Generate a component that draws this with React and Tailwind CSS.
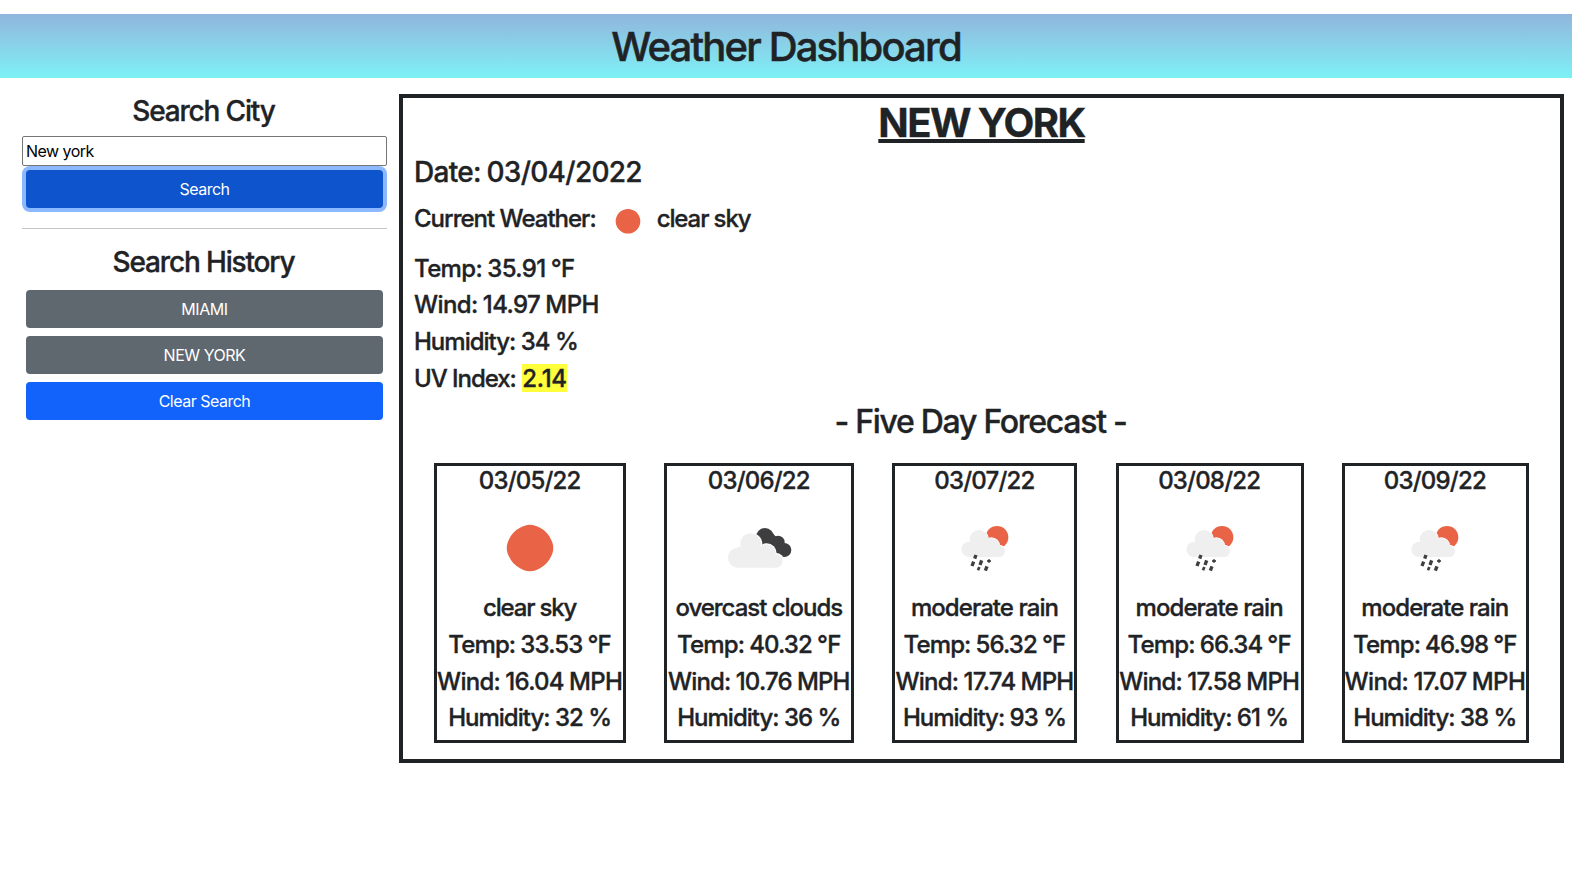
const SUN = "#e96346";
const CLOUD = "#efefef";
const DARK = "#3e3e40";

function SunIcon() {
  return (
    <svg width="80" height="70" viewBox="0 0 80 70">
      <path
        d="M40 14.7C44 14.7 46.5 16 50 17.8C55.500 20.500 59 25 61 29.500C64 35 64 41 61 46.500C59 51 55.500 55.500 50 58.200C46.500 60 44 61.300 40 61.300C36 61.300 33.500 60 30 58.200C24.500 55.500 21 51 19 46.500C16 41 16 35 19 29.500C21 25 24.500 20.500 30 17.800C33.500 16 36 14.700 40 14.700Z"
        fill={SUN}
      />
    </svg>
  );
}

function CloudsIcon() {
  return (
    <svg width="80" height="70" viewBox="-3 0 240 210">
      <g fill={DARK}>
        <circle cx="135" cy="81" r="27" />
        <circle cx="174" cy="97" r="20" />
        <circle cx="193" cy="120" r="21" />
        <path d="M118 96L150 62L200 112L186 139L150 120Z" />
      </g>
      <g fill="#fff">
        <circle cx="92" cy="103" r="35" />
        <circle cx="140" cy="130" r="30" />
        <circle cx="168" cy="153" r="24" />
      </g>
      <g fill={CLOUD}>
        <circle cx="54" cy="143" r="30" />
        <circle cx="92" cy="101" r="31" />
        <circle cx="140" cy="130" r="27" />
        <circle cx="168" cy="153" r="20" />
        <path d="M54 110H140L168 140V173H54Z" />
      </g>
    </svg>
  );
}

function RainIcon() {
  return (
    <svg width="80" height="70" viewBox="-14 0 240 210">
      <circle cx="142" cy="82" r="34" fill={SUN} />
      <g fill="#fff">
        <circle cx="88" cy="88" r="30" />
        <circle cx="125" cy="108" r="26" />
        <circle cx="149" cy="123" r="19" />
      </g>
      <g fill={CLOUD}>
        <circle cx="58" cy="118" r="23" />
        <circle cx="88" cy="88" r="28" />
        <circle cx="125" cy="108" r="24" />
        <circle cx="149" cy="124" r="17" />
        <path d="M58 100H125L149 115V141H58Z" />
      </g>
      <g stroke={DARK} strokeWidth="10" fill="none">
        <path d="M79 135L75 146" />
        <path d="M72 155L67 168" />
        <path d="M96 151L91 165" />
        <path d="M118 148V158" strokeWidth="5" />
        <path d="M112 153H124" strokeWidth="5" />
        <path d="M89 171L85 181" strokeWidth="8" />
        <path d="M112 169L107 182" />
      </g>
    </svg>
  );
}

const days = [
  { date: "03/05/22", Icon: SunIcon, sky: "clear sky", skyCls: "tracking-[-1.2px]", temp: "33.53", wind: "16.04", windCls: "tracking-[-0.72px]", hum: "32", width: "w-[192px]" },
  { date: "03/06/22", Icon: CloudsIcon, sky: "overcast clouds", skyCls: "tracking-[-1.03px]", temp: "40.32", wind: "10.76", windCls: "tracking-[-0.8px]", hum: "36", width: "w-[190px]" },
  { date: "03/07/22", Icon: RainIcon, sky: "moderate rain", skyCls: "tracking-[-0.94px]", temp: "56.32", wind: "17.74", windCls: "tracking-[-0.75px]", hum: "93", width: "w-[185px]" },
  { date: "03/08/22", Icon: RainIcon, sky: "moderate rain", skyCls: "tracking-[-0.94px]", temp: "66.34", wind: "17.58", windCls: "tracking-[-0.75px]", hum: "61", width: "w-[188px]" },
  { date: "03/09/22", Icon: RainIcon, sky: "moderate rain", skyCls: "tracking-[-0.94px]", temp: "46.98", wind: "17.07", windCls: "tracking-[-0.6px]", hum: "38", width: "w-[187px]" },
];

function DayCard({ day }) {
  const { Icon } = day;
  return (
    <div className={`${day.width} h-[280px] shrink-0 border-3 border-[#1f2326] flex flex-col items-center whitespace-nowrap text-2xl leading-[28.8px]`}>
      <p className="pt-px -ml-px tracking-[-0.8px]">{day.date}</p>
      <div className="h-[98px] pt-[14px]">
        <Icon />
      </div>
      <div className="-ml-px flex flex-col items-center gap-2">
        <p className={day.skyCls}>{day.sky}</p>
        <p className="tracking-[-0.86px] [word-spacing:-0.5px]">Temp: {day.temp} °F</p>
        <p className={`${day.windCls} [word-spacing:-0.5px]`}>Wind: {day.wind} MPH</p>
        <p className="tracking-[-1px]">Humidity: {day.hum} %</p>
      </div>
    </div>
  );
}

function Button({ children, className }) {
  return (
    <button className={`block w-full h-[38px] rounded text-white text-base ${className}`}>
      {children}
    </button>
  );
}

export default function App() {
  return (
    <div className="min-h-[869px] bg-white pt-3.5 font-['Inter',sans-serif] text-[#1f2326]">
      <header className="h-16 py-2 bg-linear-to-b from-[#8fb5dc] to-[#7cf1f6]">
        <h1 className="text-center text-[40px] leading-[50px] font-medium tracking-[-1.83px] [-webkit-text-stroke:0.5px]">Weather Dashboard</h1>
      </header>
      <main className="mt-4 flex items-start">
        <aside className="w-[399px] shrink-0 pl-[22px] pr-3">
          <h3 className="pt-px -ml-0.5 text-center text-[28px] leading-[33.6px] font-medium tracking-[-1.16px] [-webkit-text-stroke:0.35px]">Search City</h3>
          <input
            defaultValue="New york"
            className="mt-[7px] block w-full h-[30px] rounded-xs border border-[#767676] bg-white px-[3px] text-base tracking-[-0.53px] text-black outline-none"
          />
          <div className="px-1 pt-1">
            <Button className="bg-[#0d54cd] tracking-[-0.52px] ring-4 ring-[#8bb8fe]">Search</Button>
          </div>
          <hr className="mt-5 border-t border-[#c3c4c5]" />
          <h3 className="mt-[17px] -ml-0.5 text-center text-[28px] leading-[33.6px] font-medium tracking-[-1.15px] [-webkit-text-stroke:0.35px]">Search History</h3>
          <div className="mt-[11px] px-1 flex flex-col gap-2">
            <Button className="bg-[#60686f] tracking-[-0.4px]">MIAMI</Button>
            <Button className="bg-[#60686f] tracking-[-0.47px]">NEW YORK</Button>
            <Button className="bg-[#1163fb] tracking-[-0.5px]">Clear Search</Button>
          </div>
        </aside>
        <section className="w-[1165px] h-[669px] shrink-0 border-4 border-[#1f2326] px-[11px] pt-px font-medium [-webkit-text-stroke:0.35px]">
          <h1 className="flex justify-center text-[40px] leading-[48px] font-bold tracking-[-1.6px]">
            <span className="underline decoration-[4px] underline-offset-[2px] [text-decoration-skip-ink:none]">NEW YORK</span>
          </h1>
          <h3 className="mt-[9px] text-[28px] leading-[33.6px] tracking-[-0.72px] [word-spacing:-1px]">Date: 03/04/2022</h3>
          <div className="mt-1.5 flex h-[50px] items-center text-2xl leading-[28.8px]">
            <span className="pb-0.5 tracking-[-1px]">Current Weather:</span>
            <svg className="ml-[17px]" width="30" height="30" viewBox="0 0 30 30">
              <circle cx="15" cy="15.300" r="12.300" fill={SUN} />
            </svg>
            <span className="ml-3.5 pb-0.5 tracking-[-1.1px]">clear sky</span>
          </div>
          <div className="mt-[9px] flex flex-col gap-2 text-2xl leading-[28.8px]">
            <p className="tracking-[-0.65px] [word-spacing:-0.5px]">Temp: 35.91 °F</p>
            <p className="tracking-[-0.62px] [word-spacing:-0.5px]">Wind: 14.97 MPH</p>
            <p className="tracking-[-1px]">Humidity: 34 %</p>
            <p className="flex gap-[6.5px] tracking-[-1.05px]">
              <span>UV Index:</span>
              <span className="-mt-px h-7 w-[45px] bg-[#ffff3c] leading-[30.8px] tracking-[-0.3px]">2.14</span>
            </p>
          </div>
          <h2 className="mt-[9px] -ml-0.5 text-center text-[32px] leading-[38.4px] tracking-[-1.28px]">- Five Day Forecast -</h2>
          <div className="mt-[22px] px-px flex justify-around">
            {days.map((day) => (
              <DayCard key={day.date} day={day} />
            ))}
          </div>
        </section>
      </main>
    </div>
  );
}
